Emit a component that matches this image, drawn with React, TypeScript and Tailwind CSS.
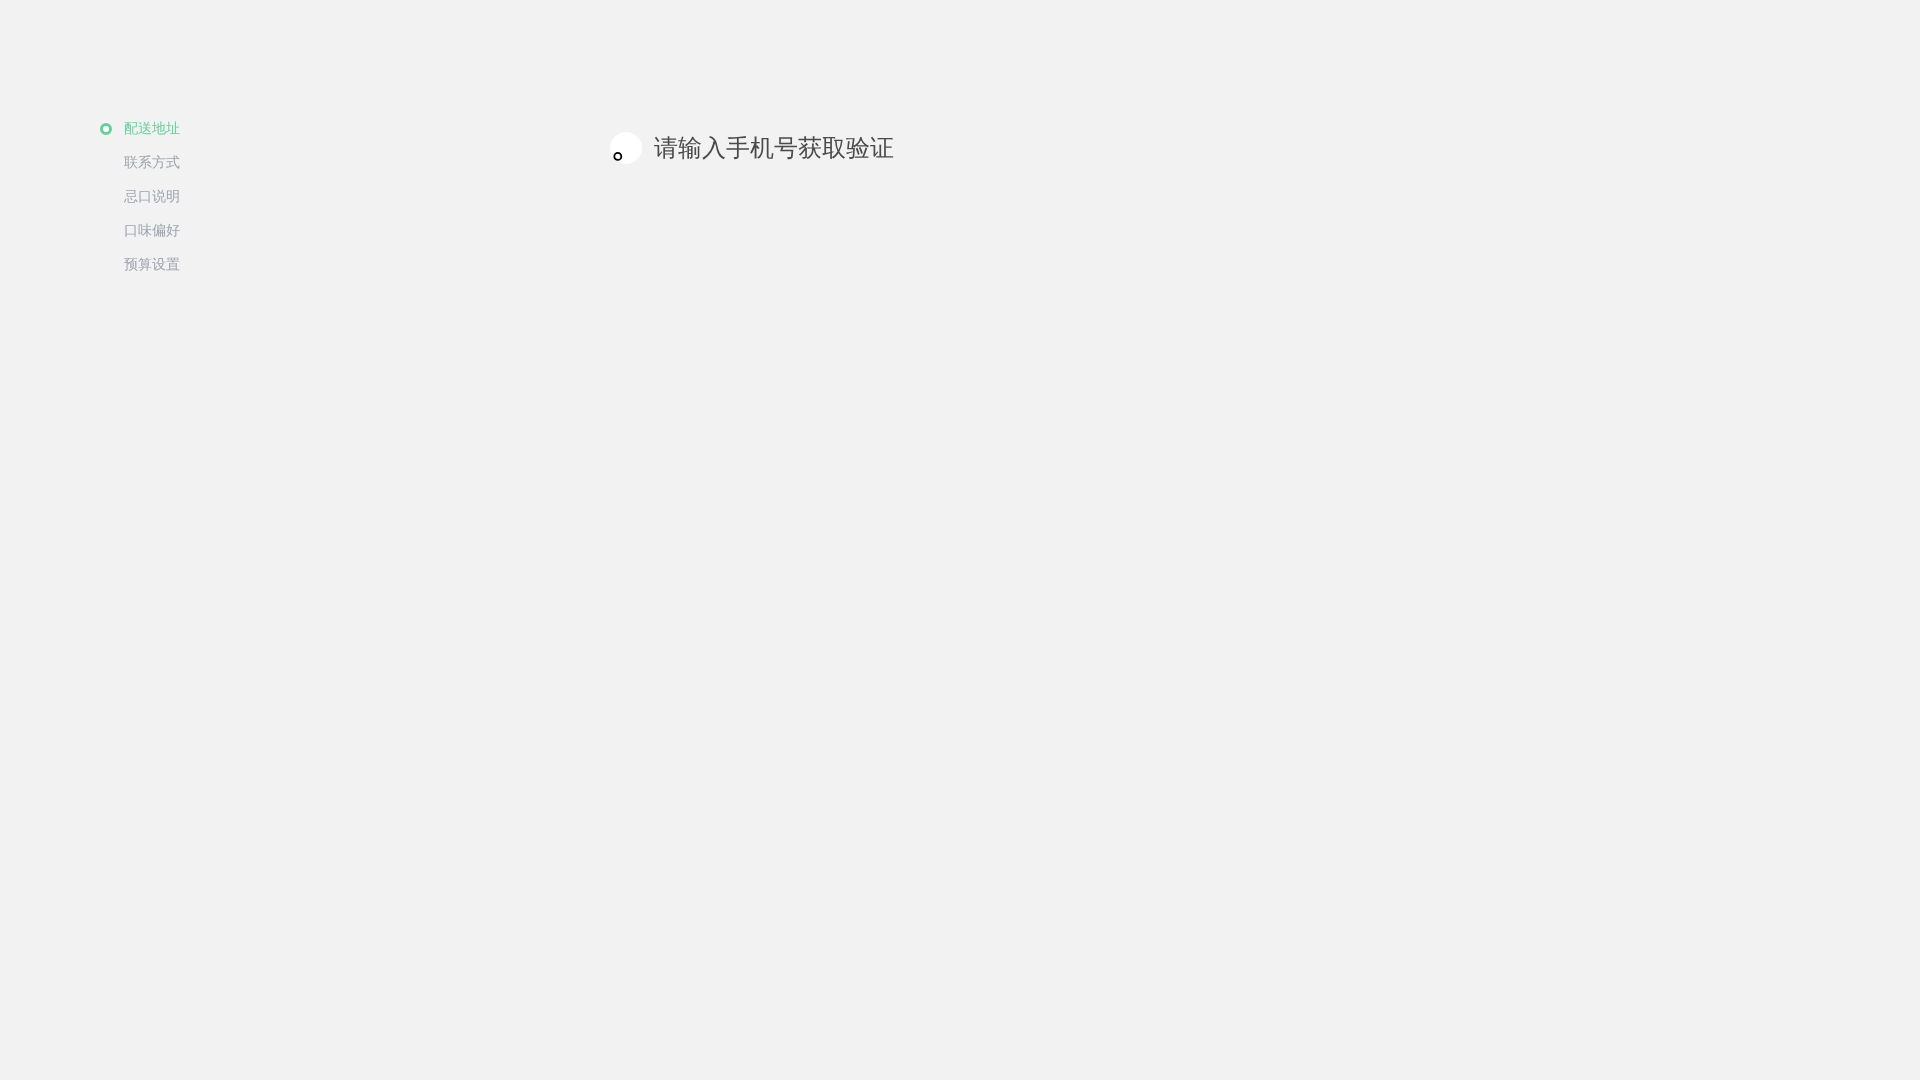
const steps = ["配送地址", "联系方式", "忌口说明", "口味偏好", "预算设置"];

export default function App() {
  const current = 0;

  return (
    <div className="flex min-h-screen bg-[#f2f2f2] font-['WenQuanYi_Zen_Hei','Noto_Sans_CJK_SC',sans-serif]">
      <aside className="w-[510px] shrink-0 pl-[100px] pt-[119px]">
        <nav>
          <ul className="flex flex-col gap-[14px]">
            {steps.map((step, index) => (
              <li key={step}>
                <a
                  href="#"
                  className={`flex items-center gap-3 text-sm ${index === current ? "text-[#66cf99]" : "text-[#9ca3af]"}`}
                >
                  <span
                    className={`size-3 rounded-full border-3 ${index === current ? "border-[#66cf99] bg-white" : "border-transparent"}`}
                  />
                  <span>{step}</span>
                </a>
              </li>
            ))}
          </ul>
        </nav>
      </aside>

      <main className="flex-1 pl-[100px] pt-[132px]">
        <div className="flex items-center gap-3">
          <svg className="size-8" viewBox="0 0 32 32" aria-hidden="true">
            <circle cx="16" cy="16" r="16" fill="#fff" />
            <circle cx="7.8" cy="24.4" r="3.5" fill="none" stroke="#000" strokeWidth="1.8" />
          </svg>
          <h1 className="text-2xl text-[#4a4a4a]">请输入手机号获取验证</h1>
        </div>
      </main>
    </div>
  );
}
